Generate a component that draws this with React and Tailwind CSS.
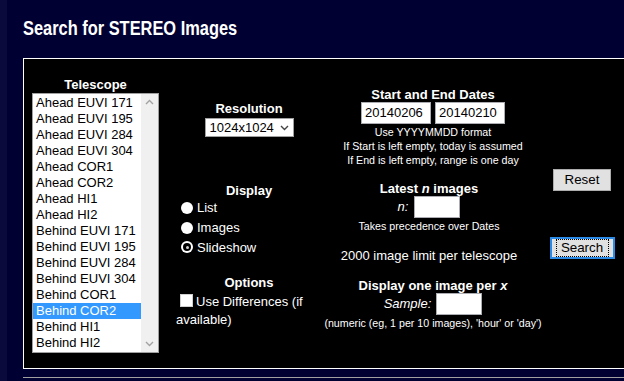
import React from 'react';

const telescopes = [
  'Ahead EUVI 171', 'Ahead EUVI 195', 'Ahead EUVI 284', 'Ahead EUVI 304',
  'Ahead COR1', 'Ahead COR2', 'Ahead HI1', 'Ahead HI2',
  'Behind EUVI 171', 'Behind EUVI 195', 'Behind EUVI 284', 'Behind EUVI 304',
  'Behind COR1', 'Behind COR2', 'Behind HI1', 'Behind HI2',
];

const Chevron = ({ up, color = '#a3a3a3' }) => (
  <svg width="9" height="6" viewBox="0 0 9 6">
    <path d={up ? 'M1 5 L4.5 1.5 L8 5' : 'M1 1 L4.5 4.5 L8 1'} fill="none" stroke={color} strokeWidth="1.4" />
  </svg>
);

const Label = ({ children }) => (
  <div className="text-[13px] leading-[15px] font-bold text-white text-center whitespace-nowrap">{children}</div>
);

const Small = ({ children, className = '' }) => (
  <div className={`text-[10.67px] leading-[14px] text-white text-center whitespace-nowrap ${className}`}>{children}</div>
);

const TextBox = ({ value = '', w = 'w-[46px]' }) => (
  <div className={`${w} h-[22px] bg-white border border-[#abadb3] pl-[3px] text-[13px] leading-[20px] text-black`}>{value}</div>
);

const Radio = ({ label, checked, h }) => (
  <div className={`flex items-center ${h}`}>
    <span className="ml-[5px] mr-[4px] w-[12px] h-[12px] rounded-full bg-white flex items-center justify-center">
      {checked && (
        <span className="w-[8px] h-[8px] rounded-full bg-black flex items-center justify-center">
          <span className="w-[3px] h-[3px] rounded-full bg-[#cfcfcf]" />
        </span>
      )}
    </span>
    <span className="text-[13px] text-white">{label}</span>
  </div>
);

export default function App() {
  return (
    <div className="w-[624px] h-[381px] overflow-hidden bg-[#000033] flex font-['Liberation_Sans',Arial,sans-serif]">
      <div className="w-[7px] h-full shrink-0 bg-[#0a0a3c]" />
      <div className="pl-[16px]">
        <h1 className="pt-[16px] h-[40px] leading-[24px] text-[20px] font-bold text-white whitespace-nowrap">
          <span className="inline-block origin-left scale-x-[0.82]">Search for STEREO Images</span>
        </h1>

        <div className="mt-[18px] w-[620px] h-[311px] border border-white bg-black flex items-start">
          {/* Telescope */}
          <div className="ml-[8px] pt-[18px] w-[127px] shrink-0">
            <Label>Telescope</Label>
            <div className="mt-[1px] h-[260px] border border-[#a0a0a0] bg-white flex">
              <div className="flex-1 py-[1px]">
                {telescopes.map((t) => (
                  <div
                    key={t}
                    className={`h-[16px] leading-[16px] pl-[3px] text-[13px] whitespace-nowrap ${t === 'Behind COR2' ? 'bg-[#3399ff] text-white' : 'text-black'}`}
                  >
                    {t}
                  </div>
                ))}
              </div>
              <div className="w-[17px] bg-[#f0f0f0] flex flex-col items-center justify-between py-[5px]">
                <Chevron up />
                <Chevron />
              </div>
            </div>
          </div>

          {/* Resolution / Display / Options */}
          <div className="ml-[17px] pt-[42px] w-[146px] shrink-0">
            <Label>Resolution</Label>
            <div className="mt-[2px] mx-auto w-[89px] h-[19px] bg-white border border-[#a0a0a0] flex items-center justify-between pl-[4px] pr-[4px]">
              <span className="text-[13px] text-black leading-[17px]">1024x1024</span>
              <Chevron color="#444" />
            </div>

            <div className="mt-[46px]">
              <Label>Display</Label>
              <Radio label="List" h="h-[20px]" />
              <Radio label="Images" h="h-[19.5px]" />
              <Radio label="Slideshow" h="h-[19.5px]" checked />
            </div>

            <div className="mt-[18px]">
              <Label>Options</Label>
              <div className="mt-[3px] text-[13px] leading-[18px] text-white">
                <span className="inline-block align-middle relative -top-[2px] ml-[4px] mr-[3px] w-[13px] h-[13px] bg-white border border-[#cfcfcf]" />
                Use Differences (if available)
              </div>
            </div>
          </div>

          {/* Dates / latest / sample */}
          <div className="pt-[28px] w-[222px] shrink-0">
            <Label>Start and End Dates</Label>
            <div className="flex justify-center gap-[4px]">
              <TextBox value="20140206" w="w-[70px]" />
              <TextBox value="20140210" w="w-[70px]" />
            </div>
            <Small className="mt-[1px]">Use YYYYMMDD format</Small>
            <Small>If Start is left empty, today is assumed</Small>
            <Small>If End is left empty, range is one day</Small>

            <div className="pr-[8px]">
              <div className="mt-[14px]">
                <Label>Latest <i>n</i> images</Label>
              </div>
              <div className="flex justify-center items-center gap-[6px]">
                <span className="text-[13px] italic text-white">n:</span>
                <TextBox />
              </div>
              <Small className="mt-[1px]">Takes precedence over Dates</Small>
              <div className="mt-[15px] text-[13px] leading-[15px] text-white text-center whitespace-nowrap">
                2000 image limit per telescope
              </div>
            </div>

            <div className="mt-[15px]">
              <Label>Display one image per <i>x</i></Label>
            </div>
            <div className="flex justify-center items-center gap-[5px]">
              <span className="text-[13px] italic text-white">Sample:</span>
              <TextBox />
            </div>
            <Small className="mt-[1px]">(numeric (eg, 1 per 10 images), 'hour' or 'day')</Small>
          </div>

          {/* Buttons */}
          <div className="pt-[110px] w-[76px] shrink-0 flex flex-col items-center">
            <button className="w-[58px] h-[22px] bg-[#e1e1e1] border border-[#adadad] text-[13.33px] text-black leading-[18px]">
              Reset
            </button>
            <button className="mt-[46px] w-[65px] h-[22px] bg-[#e1e1e1] border-2 border-[#2a8ae6] flex items-stretch">
              <span className="mx-[4px] flex-1 border border-dotted border-black flex items-center justify-center text-[13.33px] text-black whitespace-nowrap">
                Search
              </span>
            </button>
          </div>
        </div>

        <div className="mt-[8px] w-[620px] h-px bg-[#a0a0a0]" />
      </div>
    </div>
  );
}
